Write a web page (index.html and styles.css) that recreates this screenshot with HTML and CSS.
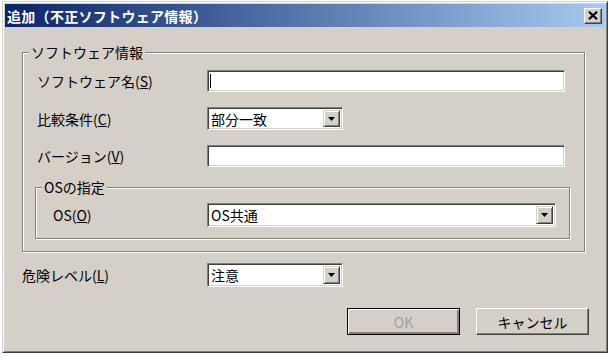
FILE: index.html
```html
<!DOCTYPE html>
<html lang="ja">
<head>
    <meta charset="UTF-8">
    <title>追加（不正ソフトウェア情報）</title>
    <link rel="stylesheet" href="styles.css">
</head>
<body>
    <div class="window">
        <div class="titlebar">
            <span class="title">追加（不正ソフトウェア情報）</span>
            <span class="close-btn">
                <svg width="10" height="9" viewBox="0 0 10 9"><path d="M1 0.8 L9 8.2 M9 0.8 L1 8.2" stroke="#000" stroke-width="2.2" fill="none"/></svg>
            </span>
        </div>

        <div class="content">
            <div class="group group-main">
                <div class="caption">ソフトウェア情報</div>
                <div class="rows">
                    <div class="row">
                        <label class="lbl lbl-main">ソフトウェア名(<u>S</u>)</label>
                        <div class="field field-wide"><span class="caret"></span></div>
                    </div>
                    <div class="row">
                        <label class="lbl lbl-main">比較条件(<u>C</u>)</label>
                        <div class="combo combo-short">
                            <span class="combo-value">部分一致</span>
                            <span class="combo-btn"><svg width="7" height="4" viewBox="0 0 7 4"><path d="M0 0 H7 L3.5 4 Z" fill="#000"/></svg></span>
                        </div>
                    </div>
                    <div class="row">
                        <label class="lbl lbl-main">バージョン(<u>V</u>)</label>
                        <div class="field field-wide"></div>
                    </div>
                </div>

                <div class="group group-os">
                    <div class="caption caption-os">OSの指定</div>
                    <div class="row row-os">
                        <label class="lbl lbl-os">OS(<u>O</u>)</label>
                        <div class="combo combo-wide">
                            <span class="combo-value">OS共通</span>
                            <span class="combo-btn"><svg width="7" height="4" viewBox="0 0 7 4"><path d="M0 0 H7 L3.5 4 Z" fill="#000"/></svg></span>
                        </div>
                    </div>
                </div>
            </div>

            <div class="row row-level">
                <label class="lbl lbl-level">危険レベル(<u>L</u>)</label>
                <div class="combo combo-short">
                    <span class="combo-value">注意</span>
                    <span class="combo-btn"><svg width="7" height="4" viewBox="0 0 7 4"><path d="M0 0 H7 L3.5 4 Z" fill="#000"/></svg></span>
                </div>
            </div>

            <div class="buttons">
                <button class="btn btn-default" disabled>OK</button>
                <button class="btn">キャンセル</button>
            </div>
        </div>
    </div>
</body>
</html>
```

FILE: styles.css
```css
body {
    margin: 0;
    background: #fff;
    font-family: "Noto Sans CJK JP", sans-serif;
    font-size: 14px;
    color: #000;
}
.window {
    width: 606px;
    margin: 1px 0 0 2px;
    box-sizing: border-box;
    background: #d4d0c8;
    border: 1px solid;
    border-color: #d4d0c8 #404040 #404040 #d4d0c8;
    box-shadow: inset 1px 1px #fff, inset -1px -1px #808080;
    padding: 2px;
}
.titlebar {
    height: 23px;
    display: flex;
    align-items: center;
    justify-content: space-between;
    padding: 0 3px 0 2px;
    background: linear-gradient(to right, #0a246a, #a6caf0);
}
.title {
    color: #fff;
    font-weight: bold;
    font-size: 14px;
    line-height: 16px;
    letter-spacing: 0.3px;
}
.close-btn {
    width: 18px;
    height: 16px;
    box-sizing: border-box;
    display: flex;
    align-items: center;
    justify-content: center;
    background: #d4d0c8;
    border: 1px solid;
    border-color: #fff #404040 #404040 #fff;
    box-shadow: inset -1px -1px #808080;
}
.content {
    padding: 25px 19px 15px 17px;
}
.group {
    border: 1px solid #808080;
    box-shadow: inset 1px 1px #fff, 1px 1px #fff;
}
.group-main {
    padding: 0 14px 12px 12px;
    margin-right: 1px;
}
.caption {
    width: fit-content;
    margin: -9px 0 0 -6px;
    padding: 0 2px;
    line-height: 16px;
    background: #d4d0c8;
}
.caption-os {
    margin-left: -11px;
}
.rows {
    display: flex;
    flex-direction: column;
    gap: 15px;
    margin-top: 10px;
    padding-right: 5px;
}
.row {
    display: flex;
    align-items: center;
}
.lbl {
    box-sizing: border-box;
    flex-shrink: 0;
    line-height: 16px;
}
.lbl-main {
    width: 172px;
    padding-left: 2px;
}
.lbl-os {
    width: 154px;
}
.lbl-level {
    width: 185px;
}
.field,
.combo {
    box-sizing: border-box;
    background: #fff;
    border: 1px solid;
    border-color: #808080 #fff #fff #808080;
    box-shadow: inset 1px 1px #404040, inset -1px -1px #d4d0c8;
}
.field {
    height: 22px;
    display: flex;
    align-items: center;
    padding-left: 2px;
}
.field-wide {
    flex: 1;
}
.caret {
    width: 1px;
    height: 14px;
    background: #000;
}
.combo {
    height: 24px;
    display: flex;
    align-items: stretch;
    padding: 2px;
}
.rows .combo {
    height: 23px;
}
.combo-short {
    width: 136px;
}
.combo-wide {
    flex: 1;
}
.combo-value {
    flex: 1;
    line-height: 18px;
    padding-left: 1px;
}
.combo-btn {
    width: 17px;
    box-sizing: border-box;
    display: flex;
    align-items: center;
    justify-content: center;
    background: #d4d0c8;
    border: 1px solid;
    border-color: #d4d0c8 #404040 #404040 #d4d0c8;
    box-shadow: inset 1px 1px #fff, inset -1px -1px #808080;
}
.group-os {
    margin-top: 20px;
    padding: 0 13px 11px 17px;
}
.row-os {
    margin-top: 8px;
}
.row-level {
    margin-top: 11px;
}
.buttons {
    display: flex;
    justify-content: flex-end;
    gap: 16px;
    margin-top: 21px;
    margin-right: -3px;
}
.btn {
    width: 113px;
    height: 27px;
    box-sizing: border-box;
    font-family: "Noto Sans CJK JP", sans-serif;
    font-size: 14px;
    color: #000;
    background: #d4d0c8;
    border: 1px solid;
    border-color: #fff #404040 #404040 #fff;
    box-shadow: inset -1px -1px #808080;
    padding: 0;
}
.btn-default {
    border: 1px solid #000;
    box-shadow: inset 1px 1px #fff, inset -2px -2px #808080, inset -1px -1px #404040;
    color: #a0a0a0;
}
```
